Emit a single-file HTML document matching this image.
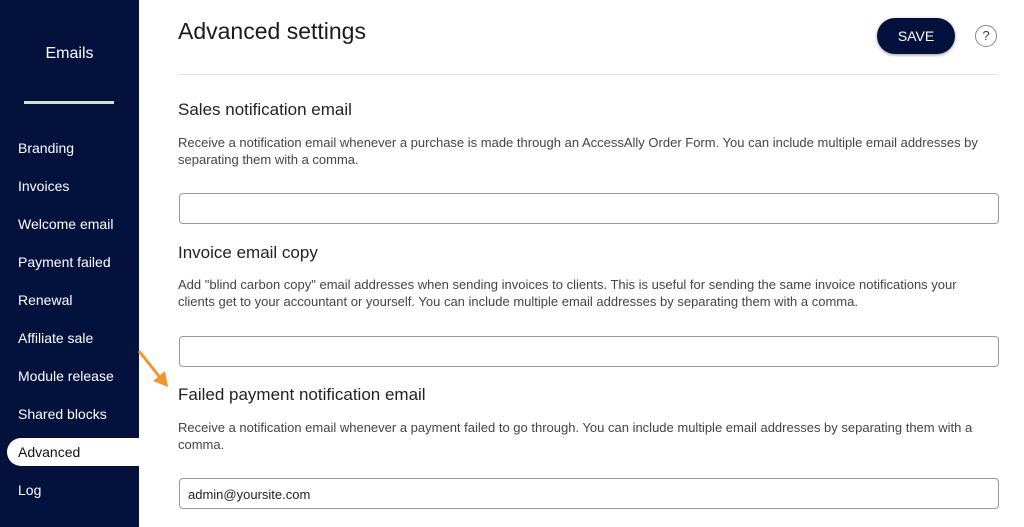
<!DOCTYPE html>
<html><head><style>
body{margin:0;width:1024px;height:527px;overflow:hidden;background:#fff;font-family:"Liberation Sans",sans-serif;position:relative}
.sb{position:absolute;left:0;top:0;width:139px;height:527px;background:#03123d}
.sb .t{position:absolute;left:0;width:139px;top:45px;text-align:center;color:#fff;font-size:16px}
.sb .ln{position:absolute;left:24px;top:101px;width:90px;height:3px;background:#d8e0c8}
.sb .i{position:absolute;left:18px;color:#fff;font-size:14px}
.sb .a{position:absolute;left:7px;top:438px;width:140px;height:28px;background:#fff;border-radius:14px 0 0 14px}
h1{position:absolute;left:178px;top:18px;margin:0;font-weight:400;font-size:23px;color:#1a1a1a}
h2{position:absolute;left:178px;margin:0;font-weight:400;font-size:17px;color:#222}
p{position:absolute;left:178px;width:812px;margin:0;font-size:13px;line-height:17px;color:#444}
.in{position:absolute;left:179px;width:820px;height:31px;border:1px solid #999;border-radius:4px;box-sizing:border-box;font-size:13px;color:#222;padding:8px 8px}
</style></head><body>
<div class="sb">
<div class="t">Emails</div><div class="ln"></div>
<div class="a"></div>
<div class="i" style="top:140px">Branding</div>
<div class="i" style="top:178px">Invoices</div>
<div class="i" style="top:216px">Welcome email</div>
<div class="i" style="top:254px">Payment failed</div>
<div class="i" style="top:292px">Renewal</div>
<div class="i" style="top:330px">Affiliate sale</div>
<div class="i" style="top:368px">Module release</div>
<div class="i" style="top:406px">Shared blocks</div>
<div class="i" style="top:444px;color:#111">Advanced</div>
<div class="i" style="top:482px">Log</div>
</div>
<h1>Advanced settings</h1>
<div style="position:absolute;left:877px;top:18px;width:78px;height:36px;border-radius:18px;background:#03123d;color:#fff;font-size:14px;text-align:center;line-height:36px;box-shadow:0 1px 3px rgba(0,0,0,.4)">SAVE</div>
<div style="position:absolute;left:975px;top:25px;width:20px;height:20px;border:1px solid #888;border-radius:50%;text-align:center;line-height:20px;font-size:13px;color:#444">?</div>
<div style="position:absolute;left:178px;top:74px;width:820px;height:1px;background:#e3e3e3"></div>
<h2 style="top:100px">Sales notification email</h2>
<p style="top:134px">Receive a notification email whenever a purchase is made through an AccessAlly Order Form. You can include multiple email addresses by separating them with a comma.</p>
<div class="in" style="top:193px"></div>
<h2 style="top:243px">Invoice email copy</h2>
<p style="top:276px">Add "blind carbon copy" email addresses when sending invoices to clients. This is useful for sending the same invoice notifications your clients get to your accountant or yourself. You can include multiple email addresses by separating them with a comma.</p>
<div class="in" style="top:336px"></div>
<h2 style="top:385px">Failed payment notification email</h2>
<p style="top:419px">Receive a notification email whenever a payment failed to go through. You can include multiple email addresses by separating them with a comma.</p>
<div class="in" style="top:478px">admin@yoursite.com</div>
<svg style="position:absolute;left:134px;top:348px" width="40" height="42"><path d="M5 3 L28 32" stroke="#f0962e" stroke-width="3"/><path d="M19 33 L34 39 L31 23 Z" fill="#f0962e"/></svg>
</body></html>
